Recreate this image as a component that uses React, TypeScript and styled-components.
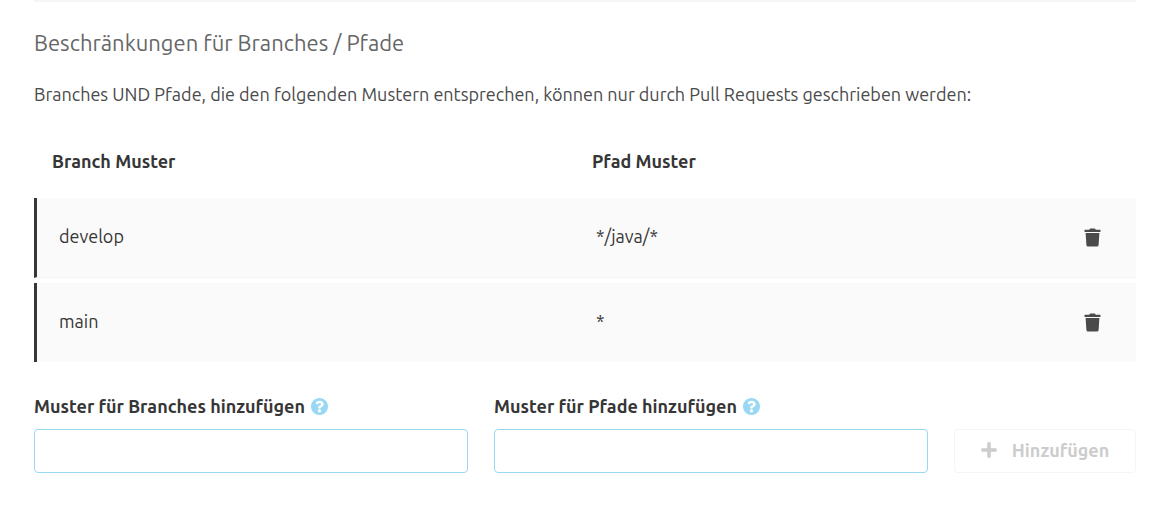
import React, { useState } from "react";
import styled, { createGlobalStyle } from "styled-components";

const GlobalStyle = createGlobalStyle`
  *, *::before, *::after { box-sizing: border-box; }
  body {
    margin: 0;
    background: #fff;
    color: #363636;
    font-family: Ubuntu, "Noto Sans", "Open Sans", sans-serif;
    font-size: 18px;
    line-height: 26px;
  }
`;

const Page = styled.main`
  padding: 0 26px 36px 34px;
`;

const Divider = styled.hr`
  height: 2px;
  margin: 0 0 26px;
  border: 0;
  background: #f5f5f5;
`;

const Heading = styled.h2`
  margin: 0 0 23px;
  color: #666;
  font-size: 22px;
  font-weight: 400;
  line-height: 30px;
`;

const Intro = styled.p`
  margin: 0 0 17px;
  color: #4a4a4a;
`;

const Table = styled.table`
  width: 100%;
  border-collapse: separate;
  border-spacing: 0 5px;
  table-layout: fixed;
`;

const HeadCell = styled.th<{ $width?: string }>`
  width: ${(p) => p.$width ?? "auto"};
  height: 64px;
  padding: 0 18px;
  font-weight: 700;
  text-align: left;
`;

const Row = styled.tr`
  background: #fafafa;
`;

const Cell = styled.td<{ $align?: "right" }>`
  height: 80px;
  padding: 0 22px 3px;
  border-bottom: 1px solid #f5f5f5;
  text-align: ${(p) => p.$align ?? "left"};

  &:first-child { border-left: 3px solid #363636; }
  &:last-child { padding: 0 35px 4px; }
  ${Row}:last-child & {
    height: 79px;
    border-bottom: 0;
  }
`;

const IconButton = styled.button`
  display: inline-flex;
  padding: 0;
  border: 0;
  background: none;
  color: #4a4a4a;
  vertical-align: middle;
  cursor: pointer;
`;

const Form = styled.form`
  display: grid;
  grid-template-columns: 1fr 1fr 182px;
  align-items: end;
  gap: 26px;
  margin-top: 26px;
`;

const Field = styled.div`
  display: flex;
  flex-direction: column;
  gap: 10px;
`;

const LabelRow = styled.div`
  display: flex;
  align-items: center;
  gap: 6px;
`;

const Label = styled.label`
  font-weight: 700;
`;

const Input = styled.input`
  width: 100%;
  height: 44px;
  padding: 0 12px;
  border: 1px solid #98d8f3;
  border-radius: 4px;
  background: #fff;
  color: inherit;
  font: inherit;
`;

const AddButton = styled.button`
  display: flex;
  align-items: center;
  justify-content: center;
  gap: 15px;
  height: 44px;
  padding: 0 0 2px;
  border: 1px solid #f5f5f5;
  border-radius: 4px;
  background: #fff;
  color: #ccc;
  font: inherit;
  font-weight: 700;
`;

const TrashIcon = () => (
  <svg width="17" height="19" viewBox="0 0 17 19" fill="currentColor" aria-hidden="true">
    <path d="M1 1.700H5.200L5.900.8Q6.200.4 6.700.4H10.300Q10.800.4 11.100.8L11.800 1.700H16Q16.500 1.700 16.500 2.200V3.500Q16.500 4 16 4H1Q.5 4 .5 3.500V2.200Q.5 1.700 1 1.700Z" />
    <path d="M1.600 5.100H15.400L14.600 17Q14.500 18.600 12.900 18.600H4.100Q2.500 18.600 2.400 17Z" />
  </svg>
);

const HelpIcon = () => (
  <svg width="17" height="17" viewBox="8 8 496 496" fill="#98d8f3" role="img" aria-label="Hilfe">
    <path d="M504 256c0 136.997-111.043 248-248 248S8 392.997 8 256C8 119.083 119.043 8 256 8s248 111.083 248 248zM262.655 90c-54.497 0-89.255 22.957-116.549 63.758-3.536 5.286-2.353 12.415 2.715 16.258l34.699 26.31c5.205 3.947 12.621 3.008 16.665-2.122 17.864-22.658 30.113-35.797 57.303-35.797 20.429 0 45.698 13.148 45.698 32.958 0 14.976-12.363 22.667-32.534 33.976C247.128 238.528 216 254.941 216 296v4c0 6.627 5.373 12 12 12h56c6.627 0 12-5.373 12-12v-1.333c0-28.462 83.186-29.647 83.186-106.667 0-58.002-60.165-102-116.531-102zM256 338c-25.365 0-46 20.635-46 46 0 25.364 20.635 46 46 46s46-20.636 46-46c0-25.365-20.635-46-46-46z" />
  </svg>
);

const PlusIcon = () => (
  <svg width="16" height="16" viewBox="0 0 16 16" fill="currentColor" aria-hidden="true">
    <path d="M7 .3h2q.8 0 .8.8v5.100h5.100q.8 0 .8.8v2q0 .8-.8.8H9.800v5.100q0 .8-.8.8H7q-.8 0-.8-.8V9.800H1.100q-.8 0-.8-.8V7q0-.8.8-.8h5.100V1.100q0-.8.8-.8z" />
  </svg>
);

const initialRules = [
  { branch: "develop", path: "*/java/*" },
  { branch: "main", path: "*" },
];

export default function App() {
  const [rules, setRules] = useState(initialRules);
  const [branch, setBranch] = useState("");
  const [path, setPath] = useState("");

  const addRule = (event: React.FormEvent) => {
    event.preventDefault();
    setRules([...rules, { branch, path }]);
    setBranch("");
    setPath("");
  };

  return (
    <>
      <GlobalStyle />
      <Page>
        <Divider />
        <Heading>Beschränkungen für Branches / Pfade</Heading>
        <Intro>
          Branches UND Pfade, die den folgenden Mustern entsprechen, können nur durch Pull Requests
          geschrieben werden:
        </Intro>
        <Table>
          <thead>
            <tr>
              <HeadCell $width="49%">Branch Muster</HeadCell>
              <HeadCell>Pfad Muster</HeadCell>
              <HeadCell as="td" $width="10%" />
            </tr>
          </thead>
          <tbody>
            {rules.map((rule, index) => (
              <Row key={index}>
                <Cell>{rule.branch}</Cell>
                <Cell>{rule.path}</Cell>
                <Cell $align="right">
                  <IconButton
                    type="button"
                    aria-label="Löschen"
                    onClick={() => setRules(rules.filter((_, i) => i !== index))}
                  >
                    <TrashIcon />
                  </IconButton>
                </Cell>
              </Row>
            ))}
          </tbody>
        </Table>
        <Form onSubmit={addRule}>
          <Field>
            <LabelRow>
              <Label htmlFor="branch">Muster für Branches hinzufügen</Label>
              <HelpIcon />
            </LabelRow>
            <Input id="branch" value={branch} onChange={(e) => setBranch(e.target.value)} />
          </Field>
          <Field>
            <LabelRow>
              <Label htmlFor="path">Muster für Pfade hinzufügen</Label>
              <HelpIcon />
            </LabelRow>
            <Input id="path" value={path} onChange={(e) => setPath(e.target.value)} />
          </Field>
          <AddButton type="submit" disabled={!branch || !path}>
            <PlusIcon />
            Hinzufügen
          </AddButton>
        </Form>
      </Page>
    </>
  );
}
